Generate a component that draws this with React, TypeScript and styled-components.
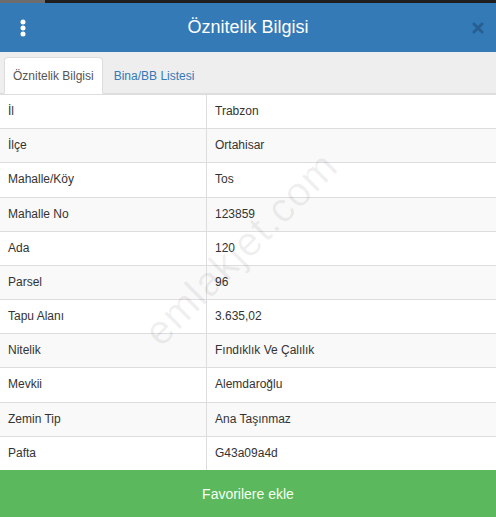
import * as React from 'react';
import styled, {createGlobalStyle} from 'styled-components';

interface IRow {
    label: string;
    value: string;
}

const rows: IRow[] = [
    {label: 'İl', value: 'Trabzon'},
    {label: 'İlçe', value: 'Ortahisar'},
    {label: 'Mahalle/Köy', value: 'Tos'},
    {label: 'Mahalle No', value: '123859'},
    {label: 'Ada', value: '120'},
    {label: 'Parsel', value: '96'},
    {label: 'Tapu Alanı', value: '3.635,02'},
    {label: 'Nitelik', value: 'Fındıklık Ve Çalılık'},
    {label: 'Mevkii', value: 'Alemdaroğlu'},
    {label: 'Zemin Tip', value: 'Ana Taşınmaz'},
    {label: 'Pafta', value: 'G43a09a4d'}
];

const GlobalStyle = createGlobalStyle`
    html, body {
        margin: 0;
        padding: 0;
        background: #fff;
    }
    body {
        font-family: Arial, "Liberation Sans", sans-serif;
        font-size: 12px;
        color: #333;
    }
`;

/* tslint:disable:variable-name */
const Panel = styled.div`
    position: relative;
    width: 496px;
    height: 517px;
    overflow: hidden;
    display: flex;
    flex-direction: column;
`;

const TopStrip = styled.div`
    height: 3px;
    background: linear-gradient(to right, #6d6d6d 0, #6d6d6d 45px, #1e1e1e 45px);
`;

const Header = styled.div`
    height: 49px;
    background: #337ab7;
    display: flex;
    align-items: center;
    justify-content: space-between;
    padding: 0 12px 0 17px;
`;

const Title = styled.div`
    flex: 1;
    text-align: center;
    color: #fff;
    font-size: 18px;
    margin-top: -1px;
    padding-right: 5px;
`;

const IconButton = styled.span<{muted?: boolean}>`
    width: 12px;
    display: flex;
    justify-content: center;
    align-items: center;
    opacity: ${props => (props.muted ? 0.8 : 1)};
`;

const TabBar = styled.div`
    height: 41px;
    background: #eeeeee;
    border-bottom: 1px solid #dddddd;
    display: flex;
    align-items: flex-end;
    gap: 2px;
    padding-left: 4px;
`;

const Tab = styled.div<{active?: boolean}>`
    height: 37px;
    box-sizing: border-box;
    padding: 0 8px;
    display: flex;
    align-items: center;
    font-size: 12px;
    margin-bottom: -1px;
    color: ${props => (props.active ? '#555' : '#337ab7')};
    background: ${props => (props.active ? '#fff' : 'transparent')};
    border: 1px solid ${props => (props.active ? '#ddd' : 'transparent')};
    border-bottom-color: ${props => (props.active ? '#fff' : 'transparent')};
    border-radius: 4px 4px 0 0;
`;

const Table = styled.table`
    width: 100%;
    border-collapse: collapse;
    flex: 1;
`;

const Row = styled.tr<{striped: boolean}>`
    background: ${props => (props.striped ? '#f9f9f9' : '#fff')};
`;

const Cell = styled.td`
    padding: 8px;
    line-height: 1.42857;
    border-top: 1px solid #dddddd;
    border-left: 1px solid #dddddd;
    vertical-align: top;
    &:first-child {
        border-left: none;
        width: 190px;
    }
`;

const FavButton = styled.div`
    height: 47px;
    flex-shrink: 0;
    background: #5cb85c;
    color: #f4fff0;
    font-size: 14px;
    display: flex;
    align-items: center;
    justify-content: center;
`;

const Watermark = styled.div`
    position: absolute;
    left: 241px;
    top: 249px;
    transform: translate(-50%, -50%) rotate(-45deg);
    font-size: 41px;
    color: rgba(0, 0, 0, 0.065);
    white-space: nowrap;
    pointer-events: none;
    letter-spacing: 1px;
`;
/* tslint:enable:variable-name */

function KebabIcon(): JSX.Element {
    return (
        <svg width="6" height="18" viewBox="0 0 6 18">
            <circle cx="3" cy="3" r="2.5" fill="#fff" />
            <circle cx="3" cy="9" r="2.5" fill="#fff" />
            <circle cx="3" cy="15" r="2.5" fill="#fff" />
        </svg>
    );
}

function CloseIcon(): JSX.Element {
    return (
        <svg width="12" height="12" viewBox="0 0 12 12">
            <path d="M2 2 L10 10 M10 2 L2 10" stroke="#25598a" strokeWidth="3" strokeLinecap="round" />
        </svg>
    );
}

export default function App(): JSX.Element {
    return (
        <Panel>
            <GlobalStyle />
            <TopStrip />
            <Header>
                <IconButton>
                    <KebabIcon />
                </IconButton>
                <Title>Öznitelik Bilgisi</Title>
                <IconButton muted>
                    <CloseIcon />
                </IconButton>
            </Header>
            <TabBar>
                <Tab active>Öznitelik Bilgisi</Tab>
                <Tab>Bina/BB Listesi</Tab>
            </TabBar>
            <Table>
                <tbody>
                    {rows.map((row, i) => (
                        <Row key={row.label} striped={i % 2 === 1}>
                            <Cell>{row.label}</Cell>
                            <Cell>{row.value}</Cell>
                        </Row>
                    ))}
                </tbody>
            </Table>
            <FavButton>Favorilere ekle</FavButton>
            <Watermark>emlakjet.com</Watermark>
        </Panel>
    );
}
